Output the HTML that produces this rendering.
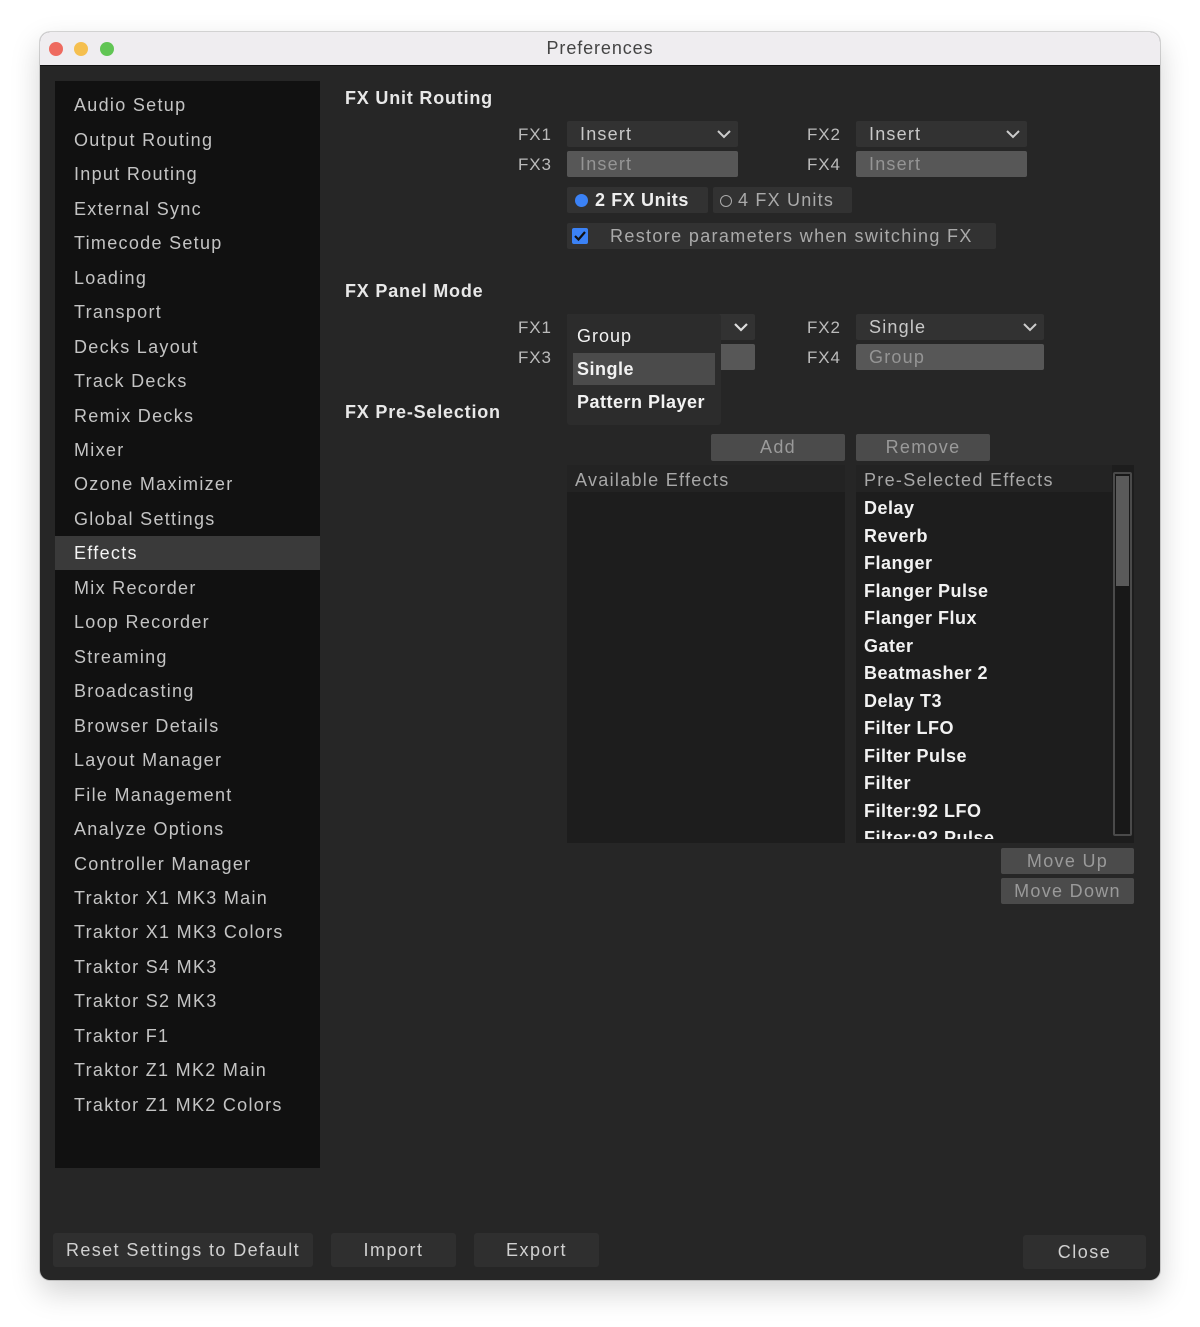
<!DOCTYPE html>
<html><head><meta charset="utf-8">
<style>
*{margin:0;padding:0;box-sizing:border-box}
body{width:1200px;height:1327px;background:#fff;font-family:"Liberation Sans",sans-serif;position:relative;overflow:hidden}
.win{position:absolute;left:40px;top:32px;width:1120px;height:1248px;background:#262626;border-radius:10px;overflow:hidden;box-shadow:0 12px 30px rgba(0,0,0,0.18),0 0 0 1px rgba(0,0,0,0.15)}
.tb{position:absolute;left:0;top:0;width:1120px;height:34px;background:#efedf0;border-bottom:1px solid #111;text-align:center;line-height:33px;font-size:18px;letter-spacing:0.9px;color:#444}
.dot{position:absolute;top:10px;width:14px;height:14px;border-radius:50%}
.a{position:absolute;white-space:nowrap}
.side{position:absolute;left:15px;top:49px;width:265px;height:1087px;background:#111}
.si{position:absolute;left:74px;font-size:18px;color:#c4c4c4;letter-spacing:1.3px;line-height:20px}
.h{font-size:18px;color:#e8e8e8;letter-spacing:0.8px;font-weight:bold}
.lbl{font-size:17px;color:#bbb;letter-spacing:0.9px}
.dd{position:absolute;height:26px;background:#323232;border-radius:2px;color:#c8c8c8;font-size:18px;line-height:26px;padding-left:13px;letter-spacing:1.2px}
.dis{background:#575757;color:#959595}
.chev{position:absolute;right:6px;top:5px}
.btn{position:absolute;background:#4b4b4b;color:#9a9a9a;font-size:18px;text-align:center;border-radius:2px;letter-spacing:1.3px}
.li{position:absolute;left:8px;font-size:18px;color:#f2f2f2;letter-spacing:0.5px;font-weight:bold}
.bb{position:absolute;background:#2f2f2f;color:#d0d0d0;font-size:18px;text-align:center;border-radius:3px;letter-spacing:1.5px}
</style></head><body>
<div class="win">
<div class="tb">Preferences
<div class="dot" style="left:9px;background:#ee6a5f"></div>
<div class="dot" style="left:34px;background:#f5bf4f"></div>
<div class="dot" style="left:60px;background:#61c554"></div>
</div>
<div class="side">
<div style="position:absolute;left:0;top:455px;width:265px;height:34px;background:#3a3a3a"></div>
</div>
</div>
<div id="c" style="position:absolute;left:0;top:0;width:1200px;height:1327px">
<div class="si a" style="top:95px">Audio Setup</div>
<div class="si a" style="top:130px">Output Routing</div>
<div class="si a" style="top:164px">Input Routing</div>
<div class="si a" style="top:199px">External Sync</div>
<div class="si a" style="top:233px">Timecode Setup</div>
<div class="si a" style="top:268px">Loading</div>
<div class="si a" style="top:302px">Transport</div>
<div class="si a" style="top:337px">Decks Layout</div>
<div class="si a" style="top:371px">Track Decks</div>
<div class="si a" style="top:406px">Remix Decks</div>
<div class="si a" style="top:440px">Mixer</div>
<div class="si a" style="top:474px">Ozone Maximizer</div>
<div class="si a" style="top:509px">Global Settings</div>
<div class="si a" style="top:543px;color:#f4f4f4">Effects</div>
<div class="si a" style="top:578px">Mix Recorder</div>
<div class="si a" style="top:612px">Loop Recorder</div>
<div class="si a" style="top:647px">Streaming</div>
<div class="si a" style="top:681px">Broadcasting</div>
<div class="si a" style="top:716px">Browser Details</div>
<div class="si a" style="top:750px">Layout Manager</div>
<div class="si a" style="top:785px">File Management</div>
<div class="si a" style="top:819px">Analyze Options</div>
<div class="si a" style="top:854px">Controller Manager</div>
<div class="si a" style="top:888px">Traktor X1 MK3 Main</div>
<div class="si a" style="top:922px">Traktor X1 MK3 Colors</div>
<div class="si a" style="top:957px">Traktor S4 MK3</div>
<div class="si a" style="top:991px">Traktor S2 MK3</div>
<div class="si a" style="top:1026px">Traktor F1</div>
<div class="si a" style="top:1060px">Traktor Z1 MK2 Main</div>
<div class="si a" style="top:1095px">Traktor Z1 MK2 Colors</div>

<div class="a h" style="left:345px;top:88px">FX Unit Routing</div>
<div class="a lbl" style="left:518px;top:125px">FX1</div>
<div class="a lbl" style="left:518px;top:155px">FX3</div>
<div class="a lbl" style="left:807px;top:125px">FX2</div>
<div class="a lbl" style="left:807px;top:155px">FX4</div>
<div class="dd" style="left:567px;top:121px;width:171px">Insert<svg class="chev" width="16" height="16" viewBox="0 0 16 16"><path d="M2 5l6 6 6-6" stroke="#ccc" stroke-width="2" fill="none"/></svg></div>
<div class="dd dis" style="left:567px;top:151px;width:171px">Insert</div>
<div class="dd" style="left:856px;top:121px;width:171px">Insert<svg class="chev" width="16" height="16" viewBox="0 0 16 16"><path d="M2 5l6 6 6-6" stroke="#ccc" stroke-width="2" fill="none"/></svg></div>
<div class="dd dis" style="left:856px;top:151px;width:171px">Insert</div>
<div class="dd" style="left:567px;top:187px;width:141px;padding-left:8px;color:#eee;font-weight:bold;letter-spacing:0.6px"><span style="display:inline-block;width:13px;height:13px;border-radius:50%;background:#3b82f6;vertical-align:-1px;margin-right:7px"></span>2 FX Units</div>
<div class="dd" style="left:713px;top:187px;width:139px;padding-left:7px;color:#aaa"><span style="display:inline-block;width:12px;height:12px;border-radius:50%;border:1.5px solid #aaa;vertical-align:-1px;margin-right:6px"></span>4 FX Units</div>
<div class="dd" style="left:567px;top:223px;width:429px;padding-left:5px;color:#aaa;letter-spacing:1.35px"><span style="display:inline-block;width:16px;height:16px;background:#3b82f6;border-radius:2px;vertical-align:-2px;margin-right:22px;position:relative"><svg width="16" height="16" viewBox="0 0 16 16" style="position:absolute;left:0;top:0"><path d="M3 8l3.5 3.5L13 4" stroke="#111" stroke-width="2.2" fill="none"/></svg></span>Restore parameters when switching FX</div>

<div class="a h" style="left:345px;top:281px">FX Panel Mode</div>
<div class="a lbl" style="left:518px;top:318px">FX1</div>
<div class="a lbl" style="left:518px;top:348px">FX3</div>
<div class="a lbl" style="left:807px;top:318px">FX2</div>
<div class="a lbl" style="left:807px;top:348px">FX4</div>
<div class="dd" style="left:567px;top:314px;width:188px"><svg class="chev" width="16" height="16" viewBox="0 0 16 16"><path d="M2 5l6 6 6-6" stroke="#ddd" stroke-width="2.2" fill="none"/></svg></div>
<div class="dd dis" style="left:567px;top:344px;width:188px"></div>
<div class="dd" style="left:856px;top:314px;width:188px">Single<svg class="chev" width="16" height="16" viewBox="0 0 16 16"><path d="M2 5l6 6 6-6" stroke="#ccc" stroke-width="2" fill="none"/></svg></div>
<div class="dd dis" style="left:856px;top:344px;width:188px">Group</div>
<div class="a" style="left:567px;top:314px;width:154px;height:111px;background:#2c2c2c;border-radius:3px"></div>
<div class="a" style="left:573px;top:353px;width:142px;height:32px;background:#4b4b4b"></div>
<div class="a" style="left:577px;top:326px;font-size:18px;color:#f2f2f2;letter-spacing:1px">Group</div>
<div class="a" style="left:577px;top:359px;font-size:18px;color:#f2f2f2;letter-spacing:0.5px;font-weight:bold">Single</div>
<div class="a" style="left:577px;top:392px;font-size:18px;color:#f2f2f2;letter-spacing:0.5px;font-weight:bold">Pattern Player</div>

<div class="a h" style="left:345px;top:402px">FX Pre-Selection</div>
<div class="btn" style="left:711px;top:434px;width:134px;height:27px;line-height:27px">Add</div>
<div class="btn" style="left:856px;top:434px;width:134px;height:27px;line-height:27px">Remove</div>

<div class="a" style="left:567px;top:465px;width:278px;height:378px;background:#1d1d1d">
<div style="position:absolute;left:0;top:0;width:278px;height:27px;background:#232323"></div>
<div class="a" style="left:8px;top:5px;font-size:18px;color:#a8a8a8;letter-spacing:1.3px">Available Effects</div>
</div>
<div class="a" style="left:856px;top:465px;width:278px;height:378px;background:#1d1d1d;overflow:hidden">
<div style="position:absolute;left:0;top:0;width:256px;height:27px;background:#232323"></div>
<div class="a" style="left:8px;top:5px;font-size:18px;color:#a8a8a8;letter-spacing:1.3px">Pre-Selected Effects</div>
<div class="li" style="top:33px">Delay</div>
<div class="li" style="top:61px">Reverb</div>
<div class="li" style="top:88px">Flanger</div>
<div class="li" style="top:116px">Flanger Pulse</div>
<div class="li" style="top:143px">Flanger Flux</div>
<div class="li" style="top:171px">Gater</div>
<div class="li" style="top:198px">Beatmasher 2</div>
<div class="li" style="top:226px">Delay T3</div>
<div class="li" style="top:253px">Filter LFO</div>
<div class="li" style="top:281px">Filter Pulse</div>
<div class="li" style="top:308px">Filter</div>
<div class="li" style="top:336px">Filter:92 LFO</div>
<div class="li" style="top:363px">Filter:92 Pulse</div>
<div style="position:absolute;left:0;top:374px;width:256px;height:4px;background:#1d1d1d"></div>
<div style="position:absolute;left:257px;top:7px;width:19px;height:364px;border:2px solid #4a4a4a;border-radius:2px;background:#181818"></div>
<div style="position:absolute;left:260px;top:11px;width:13px;height:110px;background:#5a5a5a"></div>
</div>
<div class="btn" style="left:1001px;top:848px;width:133px;height:26px;line-height:26px">Move Up</div>
<div class="btn" style="left:1001px;top:878px;width:133px;height:26px;line-height:26px">Move Down</div>

<div class="bb" style="left:53px;top:1233px;width:260px;height:34px;line-height:34px;letter-spacing:1.4px">Reset Settings to Default</div>
<div class="bb" style="left:331px;top:1233px;width:125px;height:34px;line-height:34px">Import</div>
<div class="bb" style="left:474px;top:1233px;width:125px;height:34px;line-height:34px">Export</div>
<div class="bb" style="left:1023px;top:1235px;width:123px;height:34px;line-height:34px">Close</div>
</div>
</body></html>
